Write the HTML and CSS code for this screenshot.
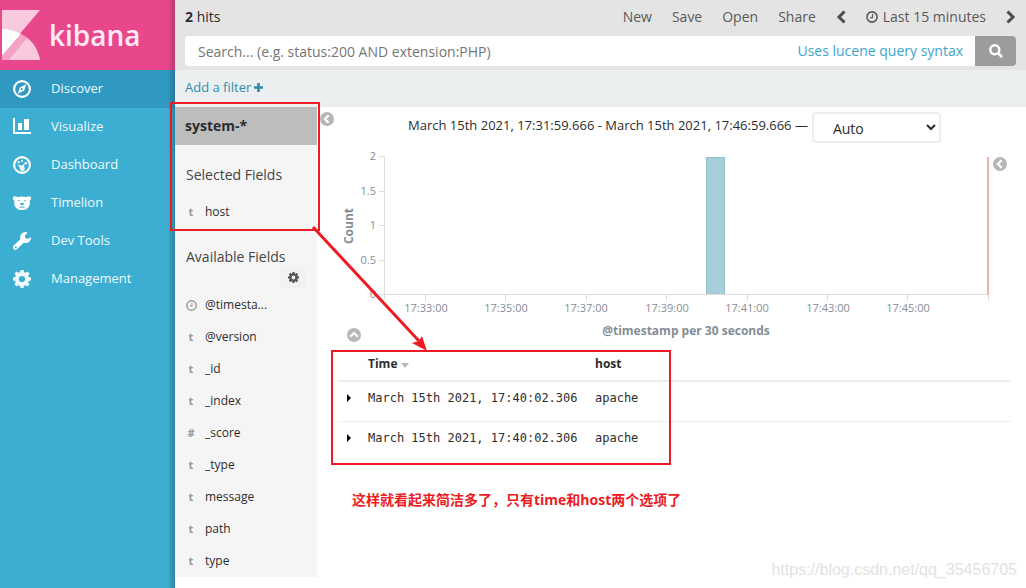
FILE: index.html
```html
<!DOCTYPE html>
<html lang="en">
<head>
<meta charset="utf-8">
<title>Discover - Kibana</title>
<link rel="stylesheet" href="styles.css">
</head>
<body>
<svg class="sprite" aria-hidden="true">
  <symbol id="chev-left" viewBox="0 0 14 14"><circle cx="7" cy="7" r="7" fill="#b7b7b7"/><path d="M8.6 3.2 4.9 7l3.7 3.8" fill="none" stroke="#fff" stroke-width="2.2"/></symbol>
  <symbol id="chev-up" viewBox="0 0 14 14"><circle cx="7" cy="7" r="7" fill="#b7b7b7"/><path d="M3.2 8.8 7 5l3.8 3.8" fill="none" stroke="#fff" stroke-width="2.2"/></symbol>
  <symbol id="clock" viewBox="0 0 12 12"><circle cx="6" cy="6" r="5.1" fill="none" stroke="currentColor" stroke-width="1.6"/><path d="M6.5 3v3.6H4" fill="none" stroke="currentColor" stroke-width="1.1"/></symbol>
  <symbol id="gear" viewBox="0 0 18 18"><path fill="currentColor" fill-rule="evenodd" d="M7.4 0h3.2l.5 2.3 1.3.5L14.400 1.500l2.200 2.200-1.300 2 .5 1.300 2.200.4v3.200l-2.300.5-.5 1.300 1.300 2-2.200 2.200-2-1.300-1.300.5-.4 2.200H7.400l-.5-2.300-1.300-.5-2 1.300-2.200-2.200 1.300-2-.5-1.300L0 10.600V7.400l2.300-.5.5-1.300-1.300-2 2.200-2.200 2 1.300 1.300-.5zM9 5.900a3.100 3.100 0 1 0 0 6.200 3.100 3.100 0 0 0 0-6.200z"/></symbol>
</svg>
<div class="app">
  <nav class="nav">
    <a class="brand" href="#">
      <svg class="brand-mark" viewBox="0 0 38 50" aria-hidden="true">
        <path d="M0 0h38L0 45z" fill="#f9c9de"/>
        <path d="M0 19c7 0 13 2 19 5L0 46z" fill="#fff"/>
        <path d="M19 24C30 29 36 39 38 50H0v-4z" fill="#f4a3c6"/>
        <path d="M25 28C32 33 36 41 38 50H7z" fill="#f9c9de"/>
      </svg>
      <span class="brand-name">kibana</span>
    </a>
    <a class="nav-link active" href="#"><svg viewBox="0 0 18 18"><circle cx="9" cy="9" r="7.900" fill="none" stroke="#fff" stroke-width="2.100"/><path fill="#fff" fill-rule="evenodd" d="M13.200 4.200 11.200 10.600 4.800 13.800 6.800 7.400zM9 7.600 7.800 8.400v2.200l2.200-1.400z"/></svg><span>Discover</span></a>
    <a class="nav-link" href="#"><svg viewBox="0 0 18 18" fill="#fff"><path d="M0 0h2v14h16v2H0zM5 5h4v7H5zM11 1h5v11h-5z"/></svg><span>Visualize</span></a>
    <a class="nav-link" href="#"><svg viewBox="0 0 18 18" fill="#fff"><circle cx="9" cy="9" r="7.900" fill="none" stroke="#fff" stroke-width="2.100"/><circle cx="9" cy="4.800" r="1.100"/><circle cx="5.600" cy="6.200" r="1.100"/><circle cx="12.800" cy="7.200" r="1.300"/><path d="m4.500 8.200 4.200 1.500 2.800-2.200-.4 3.300a2.500 2.500 0 1 1-4.200 1z"/></svg><span>Dashboard</span></a>
    <a class="nav-link" href="#"><svg viewBox="0 0 18 18"><path fill="#fff" d="M0 3c1.500-1.300 3.500-.8 4.500.2 3-.8 6-.8 9 0 1-1 3-1.500 4.500-.2.300 1.800-.3 3-1.400 3.600.2 2 .5 4-.6 5.800C14.500 14.800 12 16 9 16s-5.500-1.200-7-3.600C.900 10.600 1.200 8.600 1.400 6.600.300 6-.3 4.800 0 3z"/><g fill="none" stroke="#3caed2"><path d="M7 9.500h4L9 11zM6.500 13.600c2-.8 3-.8 5 0"/><path d="M5 6.600h2M11 6.600h2" stroke-width=".8"/></g></svg><span>Timelion</span></a>
    <a class="nav-link" href="#"><svg viewBox="0 0 18 18"><path fill="#fff" fill-rule="evenodd" d="M14.600.4A5.500 5.500 0 0 0 7.400 7.200L.7 13.600a2.300 2.300 0 0 0 3.500 3.500l6.600-6.300A5.500 5.500 0 0 0 18 5.200l-3.500 1.900-2.400-1.300V3.200zM2.700 14.500a1 1 0 1 1-.1 1.900 1 1 0 0 1 .1-1.900z"/></svg><span>Dev Tools</span></a>
    <a class="nav-link" href="#"><svg viewBox="0 0 18 18"><use href="#gear"/></svg><span>Management</span></a>
  </nav>
  <div class="page">
    <header class="top">
      <div class="top-row">
        <span class="hits"><strong>2</strong> hits</span>
        <button>New</button><button>Save</button><button>Open</button><button>Share</button>
        <button aria-label="Earlier"><svg class="arrow" viewBox="0 0 10 14"><path d="M8.500 1.500 3 7l5.500 5.500"/></svg></button>
        <button class="time"><svg class="clock"><use href="#clock"/></svg>Last 15 minutes</button>
        <button aria-label="Later"><svg class="arrow" viewBox="0 0 10 14"><path d="M1.500 1.500 7 7l-5.500 5.500"/></svg></button>
      </div>
      <form class="search">
        <input type="text" aria-label="Search" placeholder="Search... (e.g. status:200 AND extension:PHP)">
        <a href="#">Uses lucene query syntax</a>
        <button type="button" aria-label="Run search"><svg viewBox="0 0 14 14"><circle cx="5.800" cy="5.800" r="4.500"/><path d="m9 9 4 4"/></svg></button>
      </form>
    </header>
    <div class="filters"><a href="#">Add a filter<svg viewBox="0 0 10 10"><path d="M5 0v10M0 5h10"/></svg></a></div>
    <div class="body">
      <aside class="fields">
        <h2 class="index">system-*</h2>
        <h3>Selected Fields</h3>
        <ul><li><b>t</b>host</li></ul>
        <h3 class="available">Available Fields</h3>
        <button class="settings" aria-label="Field settings"><svg><use href="#gear"/></svg></button>
        <ul>
          <li><b><svg><use href="#clock"/></svg></b>@timesta...</li>
          <li><b>t</b>@version</li>
          <li><b>t</b>_id</li>
          <li><b>t</b>_index</li>
          <li><b>#</b>_score</li>
          <li><b>t</b>_type</li>
          <li><b>t</b>message</li>
          <li><b>t</b>path</li>
          <li><b>t</b>type</li>
        </ul>
      </aside>
      <button class="round hide-fields" aria-label="Hide fields"><svg><use href="#chev-left"/></svg></button>
      <main class="content">
        <div class="range">
          <label for="interval">March 15th 2021, 17:31:59.666 - March 15th 2021, 17:46:59.666 —</label>
          <select id="interval"><option>Auto</option></select>
        </div>
        <div class="chart-row">
          <svg class="chart" viewBox="0 0 652 172" role="img" aria-label="Count over time">
            <rect x="368" y="12" width="19" height="137" fill="#a7cdd8"/>
            <path d="M368.500 149V12.500h18V149" fill="none" stroke="#8fbfcd"/>
            <path class="axis" d="M41 11.500h5.500V155M41 46.500h5M41 80.500h5M41 115.500h5M41 149.500h609.500v6M87.500 150v6M167.500 150v6M248.500 150v6M328.500 150v6M409.500 150v6M489.500 150v6M569.500 150v6"/>
            <path d="M650 12v138" stroke="#f0afb0" stroke-width="2"/>
            <g class="tick" text-anchor="end"><text x="38" y="15">2</text><text x="38" y="50">1.5</text><text x="38" y="84">1</text><text x="38" y="119">0.5</text><text x="38" y="153">0</text></g>
            <g class="tick" text-anchor="middle"><text x="88" y="167">17:33:00</text><text x="168" y="167">17:35:00</text><text x="248" y="167">17:37:00</text><text x="329" y="167">17:39:00</text><text x="409" y="167">17:41:00</text><text x="490" y="167">17:43:00</text><text x="570" y="167">17:45:00</text></g>
            <text class="ytitle" text-anchor="middle" transform="translate(15 81) rotate(-90)">Count</text>
          </svg>
          <button class="round" aria-label="Show legend"><svg><use href="#chev-left"/></svg></button>
        </div>
        <div class="chart-foot">
          <button class="round" aria-label="Collapse chart"><svg><use href="#chev-up"/></svg></button>
          <span>@timestamp per 30 seconds</span>
        </div>
        <table class="docs">
          <thead><tr><th class="c-open"></th><th class="c-time">Time <svg viewBox="0 0 8 5"><path d="M0 0h8L4 5z" fill="#b4bcc2"/></svg></th><th>host</th></tr></thead>
          <tbody>
            <tr><td><svg viewBox="0 0 4 8"><path d="M0 0v8l4-4z"/></svg></td><td>March 15th 2021, 17:40:02.306</td><td>apache</td></tr>
            <tr><td><svg viewBox="0 0 4 8"><path d="M0 0v8l4-4z"/></svg></td><td>March 15th 2021, 17:40:02.306</td><td>apache</td></tr>
          </tbody>
        </table>
        <p class="note">这样就看起来简洁多了，只有time和host两个选项了</p>
      </main>
    </div>
  </div>
  <svg class="marks" viewBox="0 0 1026 588" aria-hidden="true">
    <g fill="none" stroke="#ed1c24" stroke-width="2"><path d="M171 103h148v127H171zM332 351h338v113H332z"/><path stroke-width="3" d="m313 227 106 114"/></g>
    <path fill="#ed1c24" d="m427 351-15-8 7-2 3-5z"/>
  </svg>
  <span class="watermark">https://blog.csdn.net/qq_35456705</span>
</div>
</body>
</html>
```
FILE: styles.css
```css
* { box-sizing: border-box; }
body {
  margin: 0;
  font: 13px/20px "Open Sans", "Noto Sans CJK SC", sans-serif;
  color: #2d2d2d;
  background: #fff;
}
a { text-decoration: none; color: #328caa; }
button { font: inherit; color: inherit; background: none; border: 0; padding: 0; }
h2, h3, ul, p { margin: 0; padding: 0; }
svg { flex: none; }
.sprite { position: absolute; width: 0; height: 0; }
.app { position: relative; display: flex; min-height: 100vh; overflow: hidden; }

.nav {
  flex: none;
  width: 175px;
  background: linear-gradient(to left, rgba(0,0,0,.22), rgba(0,0,0,.16) 3px, transparent 7px), #3caed2;
}
.brand {
  display: flex;
  gap: 9px;
  height: 70px;
  padding: 10px 0 0 2px;
  background: linear-gradient(to left, rgba(0,0,0,.2), rgba(0,0,0,.12) 3px, transparent 7px), #e8488b;
}
.brand-mark { width: 38px; height: 50px; }
.brand-name { font-size: 28px; line-height: 50px; font-weight: 600; color: #fdeaf3; }
.nav-link {
  display: flex;
  align-items: center;
  gap: 20px;
  height: 38px;
  padding-left: 13px;
  color: #f0fafd;
}
.nav-link span { padding-bottom: 2px; }
.nav-link svg { width: 18px; height: 18px; }
.nav-link.active { background: linear-gradient(to left, rgba(0,0,0,.2), rgba(0,0,0,.14) 3px, transparent 7px), #2f99c1; }

.page { flex: 1; min-width: 0; }
.top { height: 70px; padding: 0 10px; background: #e4e4e4; }
.top-row {
  display: flex;
  align-items: center;
  gap: 20px;
  height: 36px;
  padding-bottom: 3px;
  font-size: 14px;
  color: #5a5a5a;
}
.hits { margin-right: auto; color: #2d2d2d; }
.top-row button { display: flex; align-items: center; gap: 5px; }
.arrow { width: 10px; height: 14px; fill: none; stroke: #4d4d4d; stroke-width: 3; }
.clock { width: 12px; height: 12px; }
.search { display: flex; align-items: center; height: 30px; background: #fff; border-radius: 4px; overflow: hidden; font-size: 14px; }
.search input { flex: 1; min-width: 0; height: 30px; padding: 0 13px; border: 0; font: inherit; outline: 0; }
.search input::placeholder { color: #757575; }
.search a { padding-right: 12px; color: #3fa4cc; }
.search button { display: flex; align-items: center; justify-content: center; width: 41px; height: 30px; background: #9c9c9c; }
.search button svg { width: 14px; height: 14px; fill: none; stroke: #fff; stroke-width: 2.5; }
.filters { height: 37px; padding: 7px 10px; background: #ebeff0; }
.filters svg { width: 9px; height: 9px; margin-left: 3px; stroke: #328caa; stroke-width: 3; }

.body { display: flex; align-items: flex-start; }
.fields { flex: none; width: 142px; background: #f5f5f5; }
.index { height: 38px; padding-left: 10px; background: #bdbdbd; font-size: 14px; line-height: 38px; }
.fields h3 { padding: 20px 0 11px 11px; font-size: 14px; line-height: 20px; font-weight: 400; color: #444; }
.fields h3.available { padding: 19px 0 0 11px; }
.fields ul { list-style: none; font-size: 12px; }
.fields li { display: flex; align-items: center; height: 32px; }
.fields li b { display: flex; justify-content: center; width: 12px; margin: 0 8px 0 10px; font-size: 11px; color: #999; }
.fields li svg { width: 11px; height: 11px; }
.settings { display: flex; align-items: center; justify-content: center; width: 26px; height: 21px; margin: 0 0 1px 105px; border-radius: 4px; background: #f1f1f1; color: #555; }
.settings svg { width: 11px; height: 11px; }
.round { display: flex; }
.round svg { width: 14px; height: 14px; }
.hide-fields { flex: none; width: 21px; padding: 5px 3px; }

.content { flex: 1; min-width: 0; padding-right: 15px; }
.range { display: flex; align-items: flex-start; justify-content: center; gap: 4px; padding-top: 5px; }
.range label { line-height: 27px; font-size: 13px; }
.range select { width: 129px; height: 31px; padding: 2px 0 0 15px; border: 2px solid #ebeff0; border-radius: 4px; background: #fff; color: #2d2d2d; font: 14px "Open Sans", sans-serif; }
.chart-row { display: flex; align-items: flex-start; gap: 3px; padding-top: 2px; }
.chart-row .round { flex: none; width: 18px; padding-top: 12px; }
.chart { flex: 1; min-width: 0; }
.axis { fill: none; stroke: #ddd; }
.tick { font-size: 11px; fill: #848e96; }
.ytitle { font-size: 12px; font-weight: 700; fill: #848e96; }
.chart-foot { display: flex; align-items: center; padding: 2px 23px 0 9px; }
.chart-foot .round { width: 37px; padding-top: 9px; }
.chart-foot span { flex: 1; text-align: center; font-size: 12px; font-weight: 700; color: #848e96; }

.docs { width: 100%; margin-top: 6px; border-collapse: separate; border-spacing: 0; table-layout: fixed; font-size: 12px; line-height: 16px; }
.docs th, .docs td { padding: 8px 0; text-align: left; vertical-align: top; }
.docs th { height: 34px; border-bottom: 2px solid #ebeff0; }
.docs td { height: 40px; font-family: "DejaVu Sans Mono", monospace; }
.docs tbody tr:first-child td { border-bottom: 1px solid #ebeff0; }
.docs td:first-child { padding-left: 9px; }
.docs td svg { width: 4px; height: 8px; }
.docs th svg { width: 8px; height: 5px; }
.c-open { width: 30px; }
.c-time { width: 227px; }
.note { padding: 28px 0 0 14px; font-size: 14px; font-weight: 700; color: #ed1c24; }

.marks { position: absolute; top: 0; left: 0; width: 1026px; height: 588px; pointer-events: none; }
.watermark { position: absolute; right: 9px; bottom: 8px; font: 16px/20px "Liberation Sans", sans-serif; color: #e2e2e2; }
```
